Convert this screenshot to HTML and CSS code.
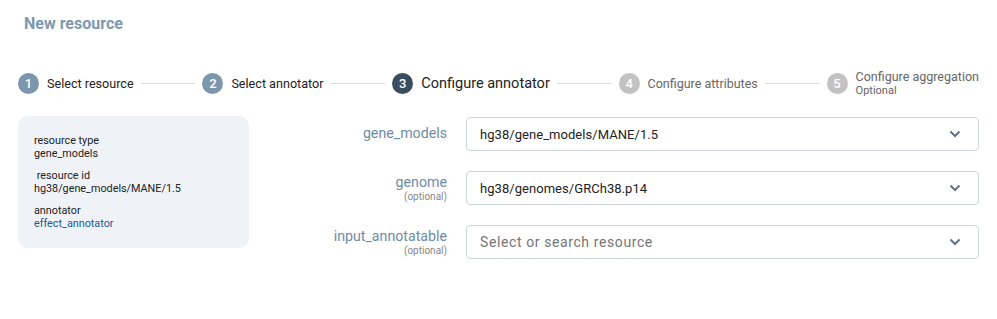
FILE: index.html
```html
<!DOCTYPE html>
<html>
<head>
<meta charset="utf-8">
<link rel="stylesheet" href="styles.css">
</head>
<body>
<div class="page">
  <h1 class="title">New resource</h1>
  <div class="stepper">
    <div class="step done"><span class="num">1</span><span class="label">Select resource</span></div>
    <div class="line"></div>
    <div class="step done"><span class="num">2</span><span class="label">Select annotator</span></div>
    <div class="line"></div>
    <div class="step active"><span class="num">3</span><span class="label">Configure annotator</span></div>
    <div class="line"></div>
    <div class="step todo"><span class="num">4</span><span class="label">Configure attributes</span></div>
    <div class="line"></div>
    <div class="step todo"><span class="num">5</span><span class="label stack"><span>Configure aggregation</span><span class="sub">Optional</span></span></div>
  </div>
  <div class="main">
    <div class="card">
      <div class="group"><div>resource type</div><div>gene_models</div></div>
      <div class="group"><div>&nbsp;resource id</div><div>hg38/gene_models/MANE/1.5</div></div>
      <div class="group"><div>annotator</div><div class="link">effect_annotator</div></div>
    </div>
    <div class="form">
      <div class="flabel single"><span>gene_models</span></div>
      <div class="select"><span class="value">hg38/gene_models/MANE/1.5</span><svg class="chev" width="12" height="8" viewBox="0 0 12 8"><path d="M1.5 1.5 L6 6 L10.5 1.5" fill="none" stroke="#5f7386" stroke-width="2"/></svg></div>
      <div class="flabel"><span>genome</span><span class="opt">(optional)</span></div>
      <div class="select"><span class="value">hg38/genomes/GRCh38.p14</span><svg class="chev" width="12" height="8" viewBox="0 0 12 8"><path d="M1.5 1.5 L6 6 L10.5 1.5" fill="none" stroke="#5f7386" stroke-width="2"/></svg></div>
      <div class="flabel"><span>input_annotatable</span><span class="opt">(optional)</span></div>
      <div class="select"><span class="value placeholder">Select or search resource</span><svg class="chev" width="12" height="8" viewBox="0 0 12 8"><path d="M1.5 1.5 L6 6 L10.5 1.5" fill="none" stroke="#5f7386" stroke-width="2"/></svg></div>
    </div>
  </div>
</div>
</body>
</html>
```
FILE: styles.css
```css
* { box-sizing: border-box; }
body {
  margin: 0;
  background: #fff;
  font-family: Roboto, "Liberation Sans", sans-serif;
  color: #222;
}
.page {
  padding: 14px 18px 0 18px;
}
.title {
  margin: 0 0 0 6px;
  font-size: 16px;
  line-height: 20px;
  font-weight: 700;
  color: #7d98af;
}
.stepper {
  margin-top: 35px;
  height: 28px;
  display: flex;
  align-items: center;
}
.step {
  display: flex;
  align-items: center;
  gap: 8px;
}
.num {
  width: 21px;
  height: 21px;
  border-radius: 50%;
  display: flex;
  align-items: center;
  justify-content: center;
  color: #fff;
  font-size: 13px;
  font-weight: 500;
}
.done .num { background: #7c97ad; }
.active .num { background: #3a4d5f; }
.todo .num { background: #c2c2c2; }
.label {
  font-size: 12.6px;
  color: #222;
}
.active .label { font-size: 14.5px; }
.todo .label { color: #666; font-size: 12.5px; }
.stack {
  display: flex;
  flex-direction: column;
  line-height: 14px;
  margin-top: 1px;
}
.sub { font-size: 11px; line-height: 13px; color: #666; }
.line {
  flex: 1;
  height: 1px;
  background: #dcdcdc;
  margin: 0 7px;
}
.main {
  margin-top: 19px;
  display: flex;
  align-items: flex-start;
}
.card {
  width: 231px;
  background: #eff3f8;
  border-radius: 10px;
  padding: 18px 16px 18px 16px;
  font-size: 10.8px;
  line-height: 13px;
  color: #222;
}
.group + .group { margin-top: 9px; }
.link { color: #1d5a94; }
.form {
  flex: 1;
  margin-left: 38px;
  margin-top: 1px;
  display: grid;
  grid-template-columns: 160px 1fr;
  column-gap: 19px;
  row-gap: 20px;
  align-items: center;
}
.flabel {
  display: flex;
  flex-direction: column;
  align-items: flex-end;
  font-size: 14.2px;
  line-height: 16px;
  color: #6f8ba6;
  margin-top: 1px;
}
.flabel.single { margin-top: -3px; }
.opt {
  font-size: 10px;
  line-height: 13px;
  color: #888;
}
.select {
  height: 34px;
  border: 1px solid #cfd5dc;
  border-radius: 4px;
  display: flex;
  align-items: center;
  justify-content: space-between;
  padding: 0 17px 0 13px;
}
.value {
  font-size: 13px;
  letter-spacing: 0.05px;
  color: #222;
}
.placeholder { color: #757575; font-size: 14px; letter-spacing: 0.6px; }
.chev { display: block; }
```
